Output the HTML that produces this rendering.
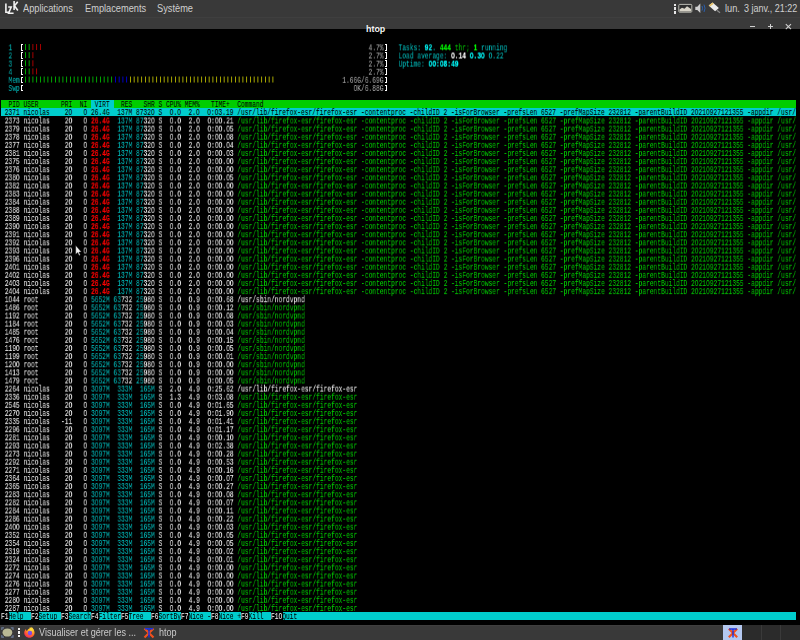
<!DOCTYPE html>
<html><head><meta charset="utf-8"><title>htop</title>
<style>
html,body{margin:0;padding:0;}
body{width:800px;height:640px;overflow:hidden;background:#000;position:relative;font-family:"Liberation Sans",sans-serif;}
.a{position:absolute;}
#term{position:absolute;left:0;top:0;width:800px;height:640px;}
.pt{font-size:10px;color:#cfcfcf;white-space:pre;transform:scaleX(0.925);transform-origin:0 0;line-height:12px}
.bt{font-size:10px;color:#cacaca;white-space:pre;transform:scaleX(0.906);transform-origin:0 0;line-height:12px}
.r{position:absolute;left:1.250px;height:8.125px;white-space:pre;font-family:"Liberation Mono",monospace;-webkit-text-stroke:0.04px currentColor;font-size:9.000px;line-height:8.125px;transform:scaleX(0.69433);transform-origin:0 0;will-change:transform;}

.KG{color:#000}.KC{color:#000}
.W{color:#f4f4f4}
.BW{color:#ffffff;font-weight:bold;-webkit-text-stroke:0.15px currentColor}
.CY{color:#00bdbd}
.BCY{color:#00ffff;font-weight:bold;-webkit-text-stroke:0.15px currentColor}
.GR{color:#00cd00}
.BGR{color:#00ff00;font-weight:bold;-webkit-text-stroke:0.15px currentColor}
.RD{color:#cd0000}
.BRD{color:#ff0000;font-weight:bold;-webkit-text-stroke:0.15px currentColor}
.BL{color:#0000ee}
.YL{color:#cdcd00}
.K{color:#000000}
.SH{color:#a8a8a8}

</style></head><body>


<div class="a" style="left:0;top:0;width:800px;height:17px;background:#393939"></div>
<div class="a" style="left:0;top:17px;width:800px;height:11.75px;background:#3a3a3a"></div>
<div class="a" style="left:0;top:17px;width:800px;height:1px;background:#3f3f3f"></div>
<svg class="a" style="left:0;top:0" width="24" height="17" viewBox="0 0 24 17">
 <g stroke="#f2f2f2" stroke-width="1.6" fill="none" stroke-linecap="square">
  <path d="M5.9 4.3 V12.2 H8.2"/>
  <path d="M9 7 H11.2 L8.6 13.2 H12.8"/>
  <path d="M14.1 1.8 V9.2 M17.2 2.4 L14.1 6.2 M14.3 5.6 L17.4 9.8"/>
 </g>
</svg>
<div class="a pt" style="left:23px;top:3px;">Applications</div>
<div class="a pt" style="left:84.5px;top:3px;">Emplacements</div>
<div class="a pt" style="left:157.2px;top:3px;">Système</div>
<div class="a" style="left:673.8px;top:3.6px;width:2.6px;height:2.4px;background:#e8e8e8"></div>
<div class="a" style="left:673.8px;top:7.4px;width:2.6px;height:2.4px;background:#e8e8e8"></div>
<div class="a" style="left:673.8px;top:11.2px;width:2.6px;height:2.4px;background:#e8e8e8"></div>
<svg class="a" style="left:676px;top:0" width="50" height="17" viewBox="676 0 50 17">
 <rect x="678.8" y="4.4" width="13" height="7.8" rx="0.8" fill="#2e2e2e" stroke="#b8b8b0" stroke-width="1"/>
 <path d="M679.5 11.6 V9.6 L682 7.8 L684.5 8.8 L687 6.2 L691 9 V11.6 Z" fill="#d8d4c8"/>
 <path d="M695.3 6.8 H697.3 L700.3 3.5 V13 L697.3 10 H695.3 Z" fill="#d0d0d0"/>
 <path d="M702 6 Q703.2 8.2 702 10.6 M704 4.6 Q706 8.2 704 12" stroke="#2a63b8" stroke-width="0.9" fill="none"/>
 <path d="M708.6 5.6 L712.6 2.4 L718.9 7.9 L715.1 11.2 Z" fill="#ececec"/>
 <path d="M708.8 5.4 L712.5 2.6 L713.8 3.7 L710.1 6.6 Z" fill="#e8c46a"/>
 <path d="M716.8 10.2 L720 12.8" stroke="#8a8a8a" stroke-width="1.3"/>
</svg>
<div class="a pt" style="left:725.3px;top:3px;">lun.</div><div class="a pt" style="left:744.2px;top:3px;transform:scaleX(0.9)">3 janv., 21:22</div>
<div class="a" style="left:365.5px;top:22.6px;font-weight:bold;font-size:9.6px;line-height:11px;color:#f4f4f4;transform:scaleX(0.925);transform-origin:0 0;white-space:pre">htop</div>
<div class="a" style="left:750.2px;top:25.6px;width:5.2px;height:1.2px;background:#d0d0d0"></div>
<div class="a" style="left:768.1px;top:26px;width:5px;height:1.1px;background:#d0d0d0"></div>
<div class="a" style="left:770.05px;top:24px;width:1.1px;height:5px;background:#d0d0d0"></div>
<svg class="a" style="left:784px;top:22px" width="9" height="9" viewBox="0 0 9 9"><path d="M1.8 2.2 L7 7.2 M7 2.2 L1.8 7.2" stroke="#d0d0d0" stroke-width="1.1"/></svg>

<div class="a" style="left:1.250px;top:100.000px;width:795.000px;height:8.125px;background:#00cd00"></div>
<div class="a" style="left:91.250px;top:100.000px;width:22.500px;height:8.125px;background:#00cdcd"></div>
<div class="a" style="left:1.250px;top:108.125px;width:795.000px;height:8.125px;background:#00cdcd"></div>
<div class="a" style="left:8.750px;top:611.875px;width:22.500px;height:8.125px;background:#00cdcd"></div>
<div class="a" style="left:38.750px;top:611.875px;width:22.500px;height:8.125px;background:#00cdcd"></div>
<div class="a" style="left:68.750px;top:611.875px;width:22.500px;height:8.125px;background:#00cdcd"></div>
<div class="a" style="left:98.750px;top:611.875px;width:22.500px;height:8.125px;background:#00cdcd"></div>
<div class="a" style="left:128.750px;top:611.875px;width:22.500px;height:8.125px;background:#00cdcd"></div>
<div class="a" style="left:158.750px;top:611.875px;width:22.500px;height:8.125px;background:#00cdcd"></div>
<div class="a" style="left:188.750px;top:611.875px;width:22.500px;height:8.125px;background:#00cdcd"></div>
<div class="a" style="left:218.750px;top:611.875px;width:22.500px;height:8.125px;background:#00cdcd"></div>
<div class="a" style="left:248.750px;top:611.875px;width:22.500px;height:8.125px;background:#00cdcd"></div>
<div class="a" style="left:282.500px;top:611.875px;width:22.500px;height:8.125px;background:#00cdcd"></div>
<div class="a" style="left:305.000px;top:611.875px;width:491.250px;height:8.125px;background:#00cdcd"></div>
<svg class="a" style="left:0;top:0" width="800" height="100" viewBox="0 0 800 100"><rect x="25.000" y="44.025" width="0.800" height="6.000" fill="#00cd00"/><rect x="28.750" y="44.025" width="0.800" height="6.000" fill="#00cd00"/><rect x="32.500" y="44.025" width="0.800" height="6.000" fill="#cd0000"/><rect x="36.250" y="44.025" width="0.800" height="6.000" fill="#cd0000"/><rect x="40.000" y="44.025" width="0.800" height="6.000" fill="#cd0000"/><rect x="25.000" y="52.150" width="0.800" height="6.000" fill="#00cd00"/><rect x="28.750" y="52.150" width="0.800" height="6.000" fill="#00cd00"/><rect x="32.500" y="52.150" width="0.800" height="6.000" fill="#cd0000"/><rect x="25.000" y="60.275" width="0.800" height="6.000" fill="#00cd00"/><rect x="28.750" y="60.275" width="0.800" height="6.000" fill="#00cd00"/><rect x="32.500" y="60.275" width="0.800" height="6.000" fill="#cd0000"/><rect x="25.000" y="68.400" width="0.800" height="6.000" fill="#00cd00"/><rect x="28.750" y="68.400" width="0.800" height="6.000" fill="#00cd00"/><rect x="32.500" y="68.400" width="0.800" height="6.000" fill="#cd0000"/><rect x="36.250" y="68.400" width="0.800" height="6.000" fill="#cd0000"/><rect x="25.000" y="76.525" width="0.800" height="6.000" fill="#00cd00"/><rect x="28.750" y="76.525" width="0.800" height="6.000" fill="#00cd00"/><rect x="32.500" y="76.525" width="0.800" height="6.000" fill="#00cd00"/><rect x="36.250" y="76.525" width="0.800" height="6.000" fill="#00cd00"/><rect x="40.000" y="76.525" width="0.800" height="6.000" fill="#00cd00"/><rect x="43.750" y="76.525" width="0.800" height="6.000" fill="#00cd00"/><rect x="47.500" y="76.525" width="0.800" height="6.000" fill="#00cd00"/><rect x="51.250" y="76.525" width="0.800" height="6.000" fill="#00cd00"/><rect x="55.000" y="76.525" width="0.800" height="6.000" fill="#00cd00"/><rect x="58.750" y="76.525" width="0.800" height="6.000" fill="#00cd00"/><rect x="62.500" y="76.525" width="0.800" height="6.000" fill="#00cd00"/><rect x="66.250" y="76.525" width="0.800" height="6.000" fill="#00cd00"/><rect x="70.000" y="76.525" width="0.800" height="6.000" fill="#00cd00"/><rect x="73.750" y="76.525" width="0.800" height="6.000" fill="#00cd00"/><rect x="77.500" y="76.525" width="0.800" height="6.000" fill="#00cd00"/><rect x="81.250" y="76.525" width="0.800" height="6.000" fill="#00cd00"/><rect x="85.000" y="76.525" width="0.800" height="6.000" fill="#00cd00"/><rect x="88.750" y="76.525" width="0.800" height="6.000" fill="#00cd00"/><rect x="92.500" y="76.525" width="0.800" height="6.000" fill="#00cd00"/><rect x="96.250" y="76.525" width="0.800" height="6.000" fill="#00cd00"/><rect x="100.000" y="76.525" width="0.800" height="6.000" fill="#00cd00"/><rect x="103.750" y="76.525" width="0.800" height="6.000" fill="#00cd00"/><rect x="107.500" y="76.525" width="0.800" height="6.000" fill="#00cd00"/><rect x="111.250" y="76.525" width="0.800" height="6.000" fill="#00cd00"/><rect x="115.000" y="76.525" width="0.800" height="6.000" fill="#0000ee"/><rect x="118.750" y="76.525" width="0.800" height="6.000" fill="#0000ee"/><rect x="122.500" y="76.525" width="0.800" height="6.000" fill="#0000ee"/><rect x="126.250" y="76.525" width="0.800" height="6.000" fill="#0000ee"/><rect x="130.000" y="76.525" width="0.800" height="6.000" fill="#cdcd00"/><rect x="133.750" y="76.525" width="0.800" height="6.000" fill="#cdcd00"/><rect x="137.500" y="76.525" width="0.800" height="6.000" fill="#cdcd00"/><rect x="141.250" y="76.525" width="0.800" height="6.000" fill="#cdcd00"/><rect x="145.000" y="76.525" width="0.800" height="6.000" fill="#cdcd00"/><rect x="148.750" y="76.525" width="0.800" height="6.000" fill="#cdcd00"/><rect x="152.500" y="76.525" width="0.800" height="6.000" fill="#cdcd00"/><rect x="156.250" y="76.525" width="0.800" height="6.000" fill="#cdcd00"/><rect x="160.000" y="76.525" width="0.800" height="6.000" fill="#cdcd00"/><rect x="163.750" y="76.525" width="0.800" height="6.000" fill="#cdcd00"/><rect x="167.500" y="76.525" width="0.800" height="6.000" fill="#cdcd00"/><rect x="171.250" y="76.525" width="0.800" height="6.000" fill="#cdcd00"/><rect x="175.000" y="76.525" width="0.800" height="6.000" fill="#cdcd00"/><rect x="178.750" y="76.525" width="0.800" height="6.000" fill="#cdcd00"/><rect x="182.500" y="76.525" width="0.800" height="6.000" fill="#cdcd00"/><rect x="186.250" y="76.525" width="0.800" height="6.000" fill="#cdcd00"/><rect x="190.000" y="76.525" width="0.800" height="6.000" fill="#cdcd00"/><rect x="193.750" y="76.525" width="0.800" height="6.000" fill="#cdcd00"/><rect x="197.500" y="76.525" width="0.800" height="6.000" fill="#cdcd00"/><rect x="201.250" y="76.525" width="0.800" height="6.000" fill="#cdcd00"/><rect x="205.000" y="76.525" width="0.800" height="6.000" fill="#cdcd00"/><rect x="208.750" y="76.525" width="0.800" height="6.000" fill="#cdcd00"/><rect x="212.500" y="76.525" width="0.800" height="6.000" fill="#cdcd00"/><rect x="216.250" y="76.525" width="0.800" height="6.000" fill="#cdcd00"/><rect x="220.000" y="76.525" width="0.800" height="6.000" fill="#cdcd00"/><rect x="223.750" y="76.525" width="0.800" height="6.000" fill="#cdcd00"/><rect x="227.500" y="76.525" width="0.800" height="6.000" fill="#cdcd00"/><rect x="231.250" y="76.525" width="0.800" height="6.000" fill="#cdcd00"/><rect x="235.000" y="76.525" width="0.800" height="6.000" fill="#cdcd00"/><rect x="238.750" y="76.525" width="0.800" height="6.000" fill="#cdcd00"/><rect x="242.500" y="76.525" width="0.800" height="6.000" fill="#cdcd00"/><rect x="246.250" y="76.525" width="0.800" height="6.000" fill="#cdcd00"/><rect x="250.000" y="76.525" width="0.800" height="6.000" fill="#cdcd00"/><rect x="253.750" y="76.525" width="0.800" height="6.000" fill="#cdcd00"/><rect x="257.500" y="76.525" width="0.800" height="6.000" fill="#cdcd00"/><rect x="261.250" y="76.525" width="0.800" height="6.000" fill="#cdcd00"/><rect x="265.000" y="76.525" width="0.800" height="6.000" fill="#cdcd00"/><rect x="268.750" y="76.525" width="0.800" height="6.000" fill="#cdcd00"/><rect x="272.500" y="76.525" width="0.800" height="6.000" fill="#cdcd00"/></svg>
<div class="a" style="left:21.000px;top:44.025px;width:2.000px;height:6.800px;border-left:1.1px solid #fff;border-top:0.8px solid #fff;border-bottom:0.8px solid #fff;box-sizing:border-box"></div>
<div class="a" style="left:384.550px;top:44.025px;width:2.000px;height:6.800px;border-right:1.1px solid #fff;border-top:0.8px solid #fff;border-bottom:0.8px solid #fff;box-sizing:border-box"></div>
<div class="a" style="left:21.000px;top:52.150px;width:2.000px;height:6.800px;border-left:1.1px solid #fff;border-top:0.8px solid #fff;border-bottom:0.8px solid #fff;box-sizing:border-box"></div>
<div class="a" style="left:384.550px;top:52.150px;width:2.000px;height:6.800px;border-right:1.1px solid #fff;border-top:0.8px solid #fff;border-bottom:0.8px solid #fff;box-sizing:border-box"></div>
<div class="a" style="left:21.000px;top:60.275px;width:2.000px;height:6.800px;border-left:1.1px solid #fff;border-top:0.8px solid #fff;border-bottom:0.8px solid #fff;box-sizing:border-box"></div>
<div class="a" style="left:384.550px;top:60.275px;width:2.000px;height:6.800px;border-right:1.1px solid #fff;border-top:0.8px solid #fff;border-bottom:0.8px solid #fff;box-sizing:border-box"></div>
<div class="a" style="left:21.000px;top:68.400px;width:2.000px;height:6.800px;border-left:1.1px solid #fff;border-top:0.8px solid #fff;border-bottom:0.8px solid #fff;box-sizing:border-box"></div>
<div class="a" style="left:384.550px;top:68.400px;width:2.000px;height:6.800px;border-right:1.1px solid #fff;border-top:0.8px solid #fff;border-bottom:0.8px solid #fff;box-sizing:border-box"></div>
<div class="a" style="left:21.000px;top:76.525px;width:2.000px;height:6.800px;border-left:1.1px solid #fff;border-top:0.8px solid #fff;border-bottom:0.8px solid #fff;box-sizing:border-box"></div>
<div class="a" style="left:384.550px;top:76.525px;width:2.000px;height:6.800px;border-right:1.1px solid #fff;border-top:0.8px solid #fff;border-bottom:0.8px solid #fff;box-sizing:border-box"></div>
<div class="a" style="left:21.000px;top:84.650px;width:2.000px;height:6.800px;border-left:1.1px solid #fff;border-top:0.8px solid #fff;border-bottom:0.8px solid #fff;box-sizing:border-box"></div>
<div class="a" style="left:384.550px;top:84.650px;width:2.000px;height:6.800px;border-right:1.1px solid #fff;border-top:0.8px solid #fff;border-bottom:0.8px solid #fff;box-sizing:border-box"></div>
<div id="term">
<div class="r" style="top:44px;transform:translateY(0.325px) scaleX(0.69433)">  <span class="CY">1  </span>                                                                                             <span class="SH">4.7%</span>    <span class="CY">Tasks: </span><span class="BCY">92</span><span class="CY">. </span><span class="BGR">444</span><span class="GR"> thr;</span><span class="CY"> </span><span class="BGR">1</span><span class="CY"> running</span></div>
<div class="r" style="top:52px;transform:translateY(0.450px) scaleX(0.69433)">  <span class="CY">2  </span>                                                                                             <span class="SH">2.7%</span>    <span class="CY">Load average: </span><span class="BW">O.14 </span><span class="BCY">O.3O </span><span class="CY">O.22</span></div>
<div class="r" style="top:60px;transform:translateY(0.575px) scaleX(0.69433)">  <span class="CY">3  </span>                                                                                             <span class="SH">2.7%</span>    <span class="CY">Uptime: </span><span class="BCY">OO:O8:49</span></div>
<div class="r" style="top:68px;transform:translateY(0.700px) scaleX(0.69433)">  <span class="CY">4  </span>                                                                                             <span class="SH">2.7%</span> </div>
<div class="r" style="top:76px;transform:translateY(0.825px) scaleX(0.69433)">  <span class="CY">Mem</span>                                                                                      <span class="SH">1.66G/6.69G</span> </div>
<div class="r" style="top:84px;transform:translateY(0.950px) scaleX(0.69433)">  <span class="CY">Swp</span>                                                                                         <span class="SH">OK/6.88G</span> </div>
<div class="r" style="top:101.200px;will-change:auto"><span class="KG">  PID USER      PRI  NI </span><span class="KC"> VIRT </span><span class="KG">  RES   SHR S CPU% MEM%   TIME+  Command                                                                                                                                              </span></div>
<div class="r" style="top:109.325px;will-change:auto"><span class="KC"> 2371 nicolas    2O   O 26.4G  137M 8732O S  O.O  2.O  O:O3.19 /usr/lib/firefox-esr/firefox-esr -contentproc -childID 2 -isForBrowser -prefsLen 6527 -prefMapSize 232812 -parentBuildID 2O21O927121355 -appdir /usr/</span></div>
<div class="r" style="top:117px;transform:translateY(0.450px) scaleX(0.69433)"><span class="W"> 2373 </span><span class="W">nicolas   </span><span class="W"> 2O </span><span class="W">  O </span><span class="BRD">26.4G</span> <span class="CY"> 137M</span> <span class="CY">87</span><span class="W">32O</span> <span class="W">S </span><span class="W"> O.O </span><span class="W"> 2.O </span><span class="W"> O:OO.21 </span><span class="GR">/usr/lib/firefox-esr/firefox-esr -contentproc -childID 2 -isForBrowser -prefsLen 6527 -prefMapSize 232812 -parentBuildID 2O21O927121355 -appdir /usr/</span></div>
<div class="r" style="top:125px;transform:translateY(0.575px) scaleX(0.69433)"><span class="W"> 2379 </span><span class="W">nicolas   </span><span class="W"> 2O </span><span class="W">  O </span><span class="BRD">26.4G</span> <span class="CY"> 137M</span> <span class="CY">87</span><span class="W">32O</span> <span class="W">S </span><span class="W"> O.O </span><span class="W"> 2.O </span><span class="W"> O:OO.O5 </span><span class="GR">/usr/lib/firefox-esr/firefox-esr -contentproc -childID 2 -isForBrowser -prefsLen 6527 -prefMapSize 232812 -parentBuildID 2O21O927121355 -appdir /usr/</span></div>
<div class="r" style="top:133px;transform:translateY(0.700px) scaleX(0.69433)"><span class="W"> 2378 </span><span class="W">nicolas   </span><span class="W"> 2O </span><span class="W">  O </span><span class="BRD">26.4G</span> <span class="CY"> 137M</span> <span class="CY">87</span><span class="W">32O</span> <span class="W">S </span><span class="W"> O.O </span><span class="W"> 2.O </span><span class="W"> O:OO.O8 </span><span class="GR">/usr/lib/firefox-esr/firefox-esr -contentproc -childID 2 -isForBrowser -prefsLen 6527 -prefMapSize 232812 -parentBuildID 2O21O927121355 -appdir /usr/</span></div>
<div class="r" style="top:141px;transform:translateY(0.825px) scaleX(0.69433)"><span class="W"> 2377 </span><span class="W">nicolas   </span><span class="W"> 2O </span><span class="W">  O </span><span class="BRD">26.4G</span> <span class="CY"> 137M</span> <span class="CY">87</span><span class="W">32O</span> <span class="W">S </span><span class="W"> O.O </span><span class="W"> 2.O </span><span class="W"> O:OO.O4 </span><span class="GR">/usr/lib/firefox-esr/firefox-esr -contentproc -childID 2 -isForBrowser -prefsLen 6527 -prefMapSize 232812 -parentBuildID 2O21O927121355 -appdir /usr/</span></div>
<div class="r" style="top:149px;transform:translateY(0.950px) scaleX(0.69433)"><span class="W"> 2381 </span><span class="W">nicolas   </span><span class="W"> 2O </span><span class="W">  O </span><span class="BRD">26.4G</span> <span class="CY"> 137M</span> <span class="CY">87</span><span class="W">32O</span> <span class="W">S </span><span class="W"> O.O </span><span class="W"> 2.O </span><span class="W"> O:OO.O3 </span><span class="GR">/usr/lib/firefox-esr/firefox-esr -contentproc -childID 2 -isForBrowser -prefsLen 6527 -prefMapSize 232812 -parentBuildID 2O21O927121355 -appdir /usr/</span></div>
<div class="r" style="top:158px;transform:translateY(0.075px) scaleX(0.69433)"><span class="W"> 2375 </span><span class="W">nicolas   </span><span class="W"> 2O </span><span class="W">  O </span><span class="BRD">26.4G</span> <span class="CY"> 137M</span> <span class="CY">87</span><span class="W">32O</span> <span class="W">S </span><span class="W"> O.O </span><span class="W"> 2.O </span><span class="W"> O:OO.OO </span><span class="GR">/usr/lib/firefox-esr/firefox-esr -contentproc -childID 2 -isForBrowser -prefsLen 6527 -prefMapSize 232812 -parentBuildID 2O21O927121355 -appdir /usr/</span></div>
<div class="r" style="top:166px;transform:translateY(0.200px) scaleX(0.69433)"><span class="W"> 2376 </span><span class="W">nicolas   </span><span class="W"> 2O </span><span class="W">  O </span><span class="BRD">26.4G</span> <span class="CY"> 137M</span> <span class="CY">87</span><span class="W">32O</span> <span class="W">S </span><span class="W"> O.O </span><span class="W"> 2.O </span><span class="W"> O:OO.OO </span><span class="GR">/usr/lib/firefox-esr/firefox-esr -contentproc -childID 2 -isForBrowser -prefsLen 6527 -prefMapSize 232812 -parentBuildID 2O21O927121355 -appdir /usr/</span></div>
<div class="r" style="top:174px;transform:translateY(0.325px) scaleX(0.69433)"><span class="W"> 238O </span><span class="W">nicolas   </span><span class="W"> 2O </span><span class="W">  O </span><span class="BRD">26.4G</span> <span class="CY"> 137M</span> <span class="CY">87</span><span class="W">32O</span> <span class="W">S </span><span class="W"> O.O </span><span class="W"> 2.O </span><span class="W"> O:OO.O5 </span><span class="GR">/usr/lib/firefox-esr/firefox-esr -contentproc -childID 2 -isForBrowser -prefsLen 6527 -prefMapSize 232812 -parentBuildID 2O21O927121355 -appdir /usr/</span></div>
<div class="r" style="top:182px;transform:translateY(0.450px) scaleX(0.69433)"><span class="W"> 2382 </span><span class="W">nicolas   </span><span class="W"> 2O </span><span class="W">  O </span><span class="BRD">26.4G</span> <span class="CY"> 137M</span> <span class="CY">87</span><span class="W">32O</span> <span class="W">S </span><span class="W"> O.O </span><span class="W"> 2.O </span><span class="W"> O:OO.OO </span><span class="GR">/usr/lib/firefox-esr/firefox-esr -contentproc -childID 2 -isForBrowser -prefsLen 6527 -prefMapSize 232812 -parentBuildID 2O21O927121355 -appdir /usr/</span></div>
<div class="r" style="top:190px;transform:translateY(0.575px) scaleX(0.69433)"><span class="W"> 2383 </span><span class="W">nicolas   </span><span class="W"> 2O </span><span class="W">  O </span><span class="BRD">26.4G</span> <span class="CY"> 137M</span> <span class="CY">87</span><span class="W">32O</span> <span class="W">S </span><span class="W"> O.O </span><span class="W"> 2.O </span><span class="W"> O:OO.OO </span><span class="GR">/usr/lib/firefox-esr/firefox-esr -contentproc -childID 2 -isForBrowser -prefsLen 6527 -prefMapSize 232812 -parentBuildID 2O21O927121355 -appdir /usr/</span></div>
<div class="r" style="top:198px;transform:translateY(0.700px) scaleX(0.69433)"><span class="W"> 2384 </span><span class="W">nicolas   </span><span class="W"> 2O </span><span class="W">  O </span><span class="BRD">26.4G</span> <span class="CY"> 137M</span> <span class="CY">87</span><span class="W">32O</span> <span class="W">S </span><span class="W"> O.O </span><span class="W"> 2.O </span><span class="W"> O:OO.OO </span><span class="GR">/usr/lib/firefox-esr/firefox-esr -contentproc -childID 2 -isForBrowser -prefsLen 6527 -prefMapSize 232812 -parentBuildID 2O21O927121355 -appdir /usr/</span></div>
<div class="r" style="top:206px;transform:translateY(0.825px) scaleX(0.69433)"><span class="W"> 2388 </span><span class="W">nicolas   </span><span class="W"> 2O </span><span class="W">  O </span><span class="BRD">26.4G</span> <span class="CY"> 137M</span> <span class="CY">87</span><span class="W">32O</span> <span class="W">S </span><span class="W"> O.O </span><span class="W"> 2.O </span><span class="W"> O:OO.OO </span><span class="GR">/usr/lib/firefox-esr/firefox-esr -contentproc -childID 2 -isForBrowser -prefsLen 6527 -prefMapSize 232812 -parentBuildID 2O21O927121355 -appdir /usr/</span></div>
<div class="r" style="top:214px;transform:translateY(0.950px) scaleX(0.69433)"><span class="W"> 2389 </span><span class="W">nicolas   </span><span class="W"> 2O </span><span class="W">  O </span><span class="BRD">26.4G</span> <span class="CY"> 137M</span> <span class="CY">87</span><span class="W">32O</span> <span class="W">S </span><span class="W"> O.O </span><span class="W"> 2.O </span><span class="W"> O:OO.OO </span><span class="GR">/usr/lib/firefox-esr/firefox-esr -contentproc -childID 2 -isForBrowser -prefsLen 6527 -prefMapSize 232812 -parentBuildID 2O21O927121355 -appdir /usr/</span></div>
<div class="r" style="top:223px;transform:translateY(0.075px) scaleX(0.69433)"><span class="W"> 239O </span><span class="W">nicolas   </span><span class="W"> 2O </span><span class="W">  O </span><span class="BRD">26.4G</span> <span class="CY"> 137M</span> <span class="CY">87</span><span class="W">32O</span> <span class="W">S </span><span class="W"> O.O </span><span class="W"> 2.O </span><span class="W"> O:OO.OO </span><span class="GR">/usr/lib/firefox-esr/firefox-esr -contentproc -childID 2 -isForBrowser -prefsLen 6527 -prefMapSize 232812 -parentBuildID 2O21O927121355 -appdir /usr/</span></div>
<div class="r" style="top:231px;transform:translateY(0.200px) scaleX(0.69433)"><span class="W"> 2391 </span><span class="W">nicolas   </span><span class="W"> 2O </span><span class="W">  O </span><span class="BRD">26.4G</span> <span class="CY"> 137M</span> <span class="CY">87</span><span class="W">32O</span> <span class="W">S </span><span class="W"> O.O </span><span class="W"> 2.O </span><span class="W"> O:OO.OO </span><span class="GR">/usr/lib/firefox-esr/firefox-esr -contentproc -childID 2 -isForBrowser -prefsLen 6527 -prefMapSize 232812 -parentBuildID 2O21O927121355 -appdir /usr/</span></div>
<div class="r" style="top:239px;transform:translateY(0.325px) scaleX(0.69433)"><span class="W"> 2392 </span><span class="W">nicolas   </span><span class="W"> 2O </span><span class="W">  O </span><span class="BRD">26.4G</span> <span class="CY"> 137M</span> <span class="CY">87</span><span class="W">32O</span> <span class="W">S </span><span class="W"> O.O </span><span class="W"> 2.O </span><span class="W"> O:OO.OO </span><span class="GR">/usr/lib/firefox-esr/firefox-esr -contentproc -childID 2 -isForBrowser -prefsLen 6527 -prefMapSize 232812 -parentBuildID 2O21O927121355 -appdir /usr/</span></div>
<div class="r" style="top:247px;transform:translateY(0.450px) scaleX(0.69433)"><span class="W"> 2393 </span><span class="W">nicolas   </span><span class="W"> 2O </span><span class="W">  O </span><span class="BRD">26.4G</span> <span class="CY"> 137M</span> <span class="CY">87</span><span class="W">32O</span> <span class="W">S </span><span class="W"> O.O </span><span class="W"> 2.O </span><span class="W"> O:OO.OO </span><span class="GR">/usr/lib/firefox-esr/firefox-esr -contentproc -childID 2 -isForBrowser -prefsLen 6527 -prefMapSize 232812 -parentBuildID 2O21O927121355 -appdir /usr/</span></div>
<div class="r" style="top:255px;transform:translateY(0.575px) scaleX(0.69433)"><span class="W"> 2396 </span><span class="W">nicolas   </span><span class="W"> 2O </span><span class="W">  O </span><span class="BRD">26.4G</span> <span class="CY"> 137M</span> <span class="CY">87</span><span class="W">32O</span> <span class="W">S </span><span class="W"> O.O </span><span class="W"> 2.O </span><span class="W"> O:OO.OO </span><span class="GR">/usr/lib/firefox-esr/firefox-esr -contentproc -childID 2 -isForBrowser -prefsLen 6527 -prefMapSize 232812 -parentBuildID 2O21O927121355 -appdir /usr/</span></div>
<div class="r" style="top:263px;transform:translateY(0.700px) scaleX(0.69433)"><span class="W"> 24O1 </span><span class="W">nicolas   </span><span class="W"> 2O </span><span class="W">  O </span><span class="BRD">26.4G</span> <span class="CY"> 137M</span> <span class="CY">87</span><span class="W">32O</span> <span class="W">S </span><span class="W"> O.O </span><span class="W"> 2.O </span><span class="W"> O:OO.OO </span><span class="GR">/usr/lib/firefox-esr/firefox-esr -contentproc -childID 2 -isForBrowser -prefsLen 6527 -prefMapSize 232812 -parentBuildID 2O21O927121355 -appdir /usr/</span></div>
<div class="r" style="top:271px;transform:translateY(0.825px) scaleX(0.69433)"><span class="W"> 24O2 </span><span class="W">nicolas   </span><span class="W"> 2O </span><span class="W">  O </span><span class="BRD">26.4G</span> <span class="CY"> 137M</span> <span class="CY">87</span><span class="W">32O</span> <span class="W">S </span><span class="W"> O.O </span><span class="W"> 2.O </span><span class="W"> O:OO.OO </span><span class="GR">/usr/lib/firefox-esr/firefox-esr -contentproc -childID 2 -isForBrowser -prefsLen 6527 -prefMapSize 232812 -parentBuildID 2O21O927121355 -appdir /usr/</span></div>
<div class="r" style="top:279px;transform:translateY(0.950px) scaleX(0.69433)"><span class="W"> 24O3 </span><span class="W">nicolas   </span><span class="W"> 2O </span><span class="W">  O </span><span class="BRD">26.4G</span> <span class="CY"> 137M</span> <span class="CY">87</span><span class="W">32O</span> <span class="W">S </span><span class="W"> O.O </span><span class="W"> 2.O </span><span class="W"> O:OO.OO </span><span class="GR">/usr/lib/firefox-esr/firefox-esr -contentproc -childID 2 -isForBrowser -prefsLen 6527 -prefMapSize 232812 -parentBuildID 2O21O927121355 -appdir /usr/</span></div>
<div class="r" style="top:288px;transform:translateY(0.075px) scaleX(0.69433)"><span class="W"> 24O4 </span><span class="W">nicolas   </span><span class="W"> 2O </span><span class="W">  O </span><span class="BRD">26.4G</span> <span class="CY"> 137M</span> <span class="CY">87</span><span class="W">32O</span> <span class="W">S </span><span class="W"> O.O </span><span class="W"> 2.O </span><span class="W"> O:OO.OO </span><span class="GR">/usr/lib/firefox-esr/firefox-esr -contentproc -childID 2 -isForBrowser -prefsLen 6527 -prefMapSize 232812 -parentBuildID 2O21O927121355 -appdir /usr/</span></div>
<div class="r" style="top:296px;transform:translateY(0.200px) scaleX(0.69433)"><span class="W"> 1O44 </span><span class="W">root      </span><span class="W"> 2O </span><span class="W">  O </span><span class="CY">5652M</span> <span class="CY">63</span><span class="W">732</span> <span class="CY">25</span><span class="W">98O</span> <span class="W">S </span><span class="W"> O.O </span><span class="W"> O.9 </span><span class="W"> O:OO.68 </span><span class="W">/usr/sbin/nordvpnd</span></div>
<div class="r" style="top:304px;transform:translateY(0.325px) scaleX(0.69433)"><span class="W"> 1486 </span><span class="W">root      </span><span class="W"> 2O </span><span class="W">  O </span><span class="CY">5652M</span> <span class="CY">63</span><span class="W">732</span> <span class="CY">25</span><span class="W">98O</span> <span class="W">S </span><span class="W"> O.O </span><span class="W"> O.9 </span><span class="W"> O:OO.12 </span><span class="GR">/usr/sbin/nordvpnd</span></div>
<div class="r" style="top:312px;transform:translateY(0.450px) scaleX(0.69433)"><span class="W"> 1192 </span><span class="W">root      </span><span class="W"> 2O </span><span class="W">  O </span><span class="CY">5652M</span> <span class="CY">63</span><span class="W">732</span> <span class="CY">25</span><span class="W">98O</span> <span class="W">S </span><span class="W"> O.O </span><span class="W"> O.9 </span><span class="W"> O:OO.O8 </span><span class="GR">/usr/sbin/nordvpnd</span></div>
<div class="r" style="top:320px;transform:translateY(0.575px) scaleX(0.69433)"><span class="W"> 1184 </span><span class="W">root      </span><span class="W"> 2O </span><span class="W">  O </span><span class="CY">5652M</span> <span class="CY">63</span><span class="W">732</span> <span class="CY">25</span><span class="W">98O</span> <span class="W">S </span><span class="W"> O.O </span><span class="W"> O.9 </span><span class="W"> O:OO.O3 </span><span class="GR">/usr/sbin/nordvpnd</span></div>
<div class="r" style="top:328px;transform:translateY(0.700px) scaleX(0.69433)"><span class="W"> 1485 </span><span class="W">root      </span><span class="W"> 2O </span><span class="W">  O </span><span class="CY">5652M</span> <span class="CY">63</span><span class="W">732</span> <span class="CY">25</span><span class="W">98O</span> <span class="W">S </span><span class="W"> O.O </span><span class="W"> O.9 </span><span class="W"> O:OO.O4 </span><span class="GR">/usr/sbin/nordvpnd</span></div>
<div class="r" style="top:336px;transform:translateY(0.825px) scaleX(0.69433)"><span class="W"> 1476 </span><span class="W">root      </span><span class="W"> 2O </span><span class="W">  O </span><span class="CY">5652M</span> <span class="CY">63</span><span class="W">732</span> <span class="CY">25</span><span class="W">98O</span> <span class="W">S </span><span class="W"> O.O </span><span class="W"> O.9 </span><span class="W"> O:OO.15 </span><span class="GR">/usr/sbin/nordvpnd</span></div>
<div class="r" style="top:344px;transform:translateY(0.950px) scaleX(0.69433)"><span class="W"> 119O </span><span class="W">root      </span><span class="W"> 2O </span><span class="W">  O </span><span class="CY">5652M</span> <span class="CY">63</span><span class="W">732</span> <span class="CY">25</span><span class="W">98O</span> <span class="W">S </span><span class="W"> O.O </span><span class="W"> O.9 </span><span class="W"> O:OO.O5 </span><span class="GR">/usr/sbin/nordvpnd</span></div>
<div class="r" style="top:353px;transform:translateY(0.075px) scaleX(0.69433)"><span class="W"> 1199 </span><span class="W">root      </span><span class="W"> 2O </span><span class="W">  O </span><span class="CY">5652M</span> <span class="CY">63</span><span class="W">732</span> <span class="CY">25</span><span class="W">98O</span> <span class="W">S </span><span class="W"> O.O </span><span class="W"> O.9 </span><span class="W"> O:OO.O1 </span><span class="GR">/usr/sbin/nordvpnd</span></div>
<div class="r" style="top:361px;transform:translateY(0.200px) scaleX(0.69433)"><span class="W"> 12OO </span><span class="W">root      </span><span class="W"> 2O </span><span class="W">  O </span><span class="CY">5652M</span> <span class="CY">63</span><span class="W">732</span> <span class="CY">25</span><span class="W">98O</span> <span class="W">S </span><span class="W"> O.O </span><span class="W"> O.9 </span><span class="W"> O:OO.OO </span><span class="GR">/usr/sbin/nordvpnd</span></div>
<div class="r" style="top:369px;transform:translateY(0.325px) scaleX(0.69433)"><span class="W"> 1413 </span><span class="W">root      </span><span class="W"> 2O </span><span class="W">  O </span><span class="CY">5652M</span> <span class="CY">63</span><span class="W">732</span> <span class="CY">25</span><span class="W">98O</span> <span class="W">S </span><span class="W"> O.O </span><span class="W"> O.9 </span><span class="W"> O:OO.OO </span><span class="GR">/usr/sbin/nordvpnd</span></div>
<div class="r" style="top:377px;transform:translateY(0.450px) scaleX(0.69433)"><span class="W"> 1479 </span><span class="W">root      </span><span class="W"> 2O </span><span class="W">  O </span><span class="CY">5652M</span> <span class="CY">63</span><span class="W">732</span> <span class="CY">25</span><span class="W">98O</span> <span class="W">S </span><span class="W"> O.O </span><span class="W"> O.9 </span><span class="W"> O:OO.O5 </span><span class="GR">/usr/sbin/nordvpnd</span></div>
<div class="r" style="top:385px;transform:translateY(0.575px) scaleX(0.69433)"><span class="W"> 2264 </span><span class="W">nicolas   </span><span class="W"> 2O </span><span class="W">  O </span><span class="CY">3O97M</span> <span class="CY"> 333M</span> <span class="CY"> 165M</span> <span class="W">S </span><span class="W"> 2.O </span><span class="W"> 4.9 </span><span class="W"> O:25.62 </span><span class="W">/usr/lib/firefox-esr/firefox-esr</span></div>
<div class="r" style="top:393px;transform:translateY(0.700px) scaleX(0.69433)"><span class="W"> 2336 </span><span class="W">nicolas   </span><span class="W"> 2O </span><span class="W">  O </span><span class="CY">3O97M</span> <span class="CY"> 333M</span> <span class="CY"> 165M</span> <span class="W">S </span><span class="W"> 1.3 </span><span class="W"> 4.9 </span><span class="W"> O:O3.O8 </span><span class="GR">/usr/lib/firefox-esr/firefox-esr</span></div>
<div class="r" style="top:401px;transform:translateY(0.825px) scaleX(0.69433)"><span class="W"> 2545 </span><span class="W">nicolas   </span><span class="W"> 2O </span><span class="W">  O </span><span class="CY">3O97M</span> <span class="CY"> 333M</span> <span class="CY"> 165M</span> <span class="W">S </span><span class="W"> O.O </span><span class="W"> 4.9 </span><span class="W"> O:O1.65 </span><span class="GR">/usr/lib/firefox-esr/firefox-esr</span></div>
<div class="r" style="top:409px;transform:translateY(0.950px) scaleX(0.69433)"><span class="W"> 227O </span><span class="W">nicolas   </span><span class="W"> 2O </span><span class="W">  O </span><span class="CY">3O97M</span> <span class="CY"> 333M</span> <span class="CY"> 165M</span> <span class="W">S </span><span class="W"> O.O </span><span class="W"> 4.9 </span><span class="W"> O:O1.9O </span><span class="GR">/usr/lib/firefox-esr/firefox-esr</span></div>
<div class="r" style="top:418px;transform:translateY(0.075px) scaleX(0.69433)"><span class="W"> 2335 </span><span class="W">nicolas   </span><span class="W">-11 </span><span class="W">  O </span><span class="CY">3O97M</span> <span class="CY"> 333M</span> <span class="CY"> 165M</span> <span class="W">S </span><span class="W"> O.O </span><span class="W"> 4.9 </span><span class="W"> O:O1.41 </span><span class="GR">/usr/lib/firefox-esr/firefox-esr</span></div>
<div class="r" style="top:426px;transform:translateY(0.200px) scaleX(0.69433)"><span class="W"> 2296 </span><span class="W">nicolas   </span><span class="W"> 2O </span><span class="W">  O </span><span class="CY">3O97M</span> <span class="CY"> 333M</span> <span class="CY"> 165M</span> <span class="W">S </span><span class="W"> O.O </span><span class="W"> 4.9 </span><span class="W"> O:O1.17 </span><span class="GR">/usr/lib/firefox-esr/firefox-esr</span></div>
<div class="r" style="top:434px;transform:translateY(0.325px) scaleX(0.69433)"><span class="W"> 2281 </span><span class="W">nicolas   </span><span class="W"> 2O </span><span class="W">  O </span><span class="CY">3O97M</span> <span class="CY"> 333M</span> <span class="CY"> 165M</span> <span class="W">S </span><span class="W"> O.O </span><span class="W"> 4.9 </span><span class="W"> O:OO.1O </span><span class="GR">/usr/lib/firefox-esr/firefox-esr</span></div>
<div class="r" style="top:442px;transform:translateY(0.450px) scaleX(0.69433)"><span class="W"> 2293 </span><span class="W">nicolas   </span><span class="W"> 2O </span><span class="W">  O </span><span class="CY">3O97M</span> <span class="CY"> 333M</span> <span class="CY"> 165M</span> <span class="W">S </span><span class="W"> O.O </span><span class="W"> 4.9 </span><span class="W"> O:O2.38 </span><span class="GR">/usr/lib/firefox-esr/firefox-esr</span></div>
<div class="r" style="top:450px;transform:translateY(0.575px) scaleX(0.69433)"><span class="W"> 2273 </span><span class="W">nicolas   </span><span class="W"> 2O </span><span class="W">  O </span><span class="CY">3O97M</span> <span class="CY"> 333M</span> <span class="CY"> 165M</span> <span class="W">S </span><span class="W"> O.O </span><span class="W"> 4.9 </span><span class="W"> O:OO.28 </span><span class="GR">/usr/lib/firefox-esr/firefox-esr</span></div>
<div class="r" style="top:458px;transform:translateY(0.700px) scaleX(0.69433)"><span class="W"> 2292 </span><span class="W">nicolas   </span><span class="W"> 2O </span><span class="W">  O </span><span class="CY">3O97M</span> <span class="CY"> 333M</span> <span class="CY"> 165M</span> <span class="W">S </span><span class="W"> O.O </span><span class="W"> 4.9 </span><span class="W"> O:OO.53 </span><span class="GR">/usr/lib/firefox-esr/firefox-esr</span></div>
<div class="r" style="top:466px;transform:translateY(0.825px) scaleX(0.69433)"><span class="W"> 2271 </span><span class="W">nicolas   </span><span class="W"> 2O </span><span class="W">  O </span><span class="CY">3O97M</span> <span class="CY"> 333M</span> <span class="CY"> 165M</span> <span class="W">S </span><span class="W"> O.O </span><span class="W"> 4.9 </span><span class="W"> O:OO.16 </span><span class="GR">/usr/lib/firefox-esr/firefox-esr</span></div>
<div class="r" style="top:474px;transform:translateY(0.950px) scaleX(0.69433)"><span class="W"> 2364 </span><span class="W">nicolas   </span><span class="W"> 2O </span><span class="W">  O </span><span class="CY">3O97M</span> <span class="CY"> 333M</span> <span class="CY"> 165M</span> <span class="W">S </span><span class="W"> O.O </span><span class="W"> 4.9 </span><span class="W"> O:OO.O7 </span><span class="GR">/usr/lib/firefox-esr/firefox-esr</span></div>
<div class="r" style="top:483px;transform:translateY(0.075px) scaleX(0.69433)"><span class="W"> 2365 </span><span class="W">nicolas   </span><span class="W"> 2O </span><span class="W">  O </span><span class="CY">3O97M</span> <span class="CY"> 333M</span> <span class="CY"> 165M</span> <span class="W">S </span><span class="W"> O.O </span><span class="W"> 4.9 </span><span class="W"> O:OO.27 </span><span class="GR">/usr/lib/firefox-esr/firefox-esr</span></div>
<div class="r" style="top:491px;transform:translateY(0.200px) scaleX(0.69433)"><span class="W"> 2283 </span><span class="W">nicolas   </span><span class="W"> 2O </span><span class="W">  O </span><span class="CY">3O97M</span> <span class="CY"> 333M</span> <span class="CY"> 165M</span> <span class="W">S </span><span class="W"> O.O </span><span class="W"> 4.9 </span><span class="W"> O:OO.O8 </span><span class="GR">/usr/lib/firefox-esr/firefox-esr</span></div>
<div class="r" style="top:499px;transform:translateY(0.325px) scaleX(0.69433)"><span class="W"> 2282 </span><span class="W">nicolas   </span><span class="W"> 2O </span><span class="W">  O </span><span class="CY">3O97M</span> <span class="CY"> 333M</span> <span class="CY"> 165M</span> <span class="W">S </span><span class="W"> O.O </span><span class="W"> 4.9 </span><span class="W"> O:OO.O7 </span><span class="GR">/usr/lib/firefox-esr/firefox-esr</span></div>
<div class="r" style="top:507px;transform:translateY(0.450px) scaleX(0.69433)"><span class="W"> 2284 </span><span class="W">nicolas   </span><span class="W"> 2O </span><span class="W">  O </span><span class="CY">3O97M</span> <span class="CY"> 333M</span> <span class="CY"> 165M</span> <span class="W">S </span><span class="W"> O.O </span><span class="W"> 4.9 </span><span class="W"> O:OO.11 </span><span class="GR">/usr/lib/firefox-esr/firefox-esr</span></div>
<div class="r" style="top:515px;transform:translateY(0.575px) scaleX(0.69433)"><span class="W"> 2286 </span><span class="W">nicolas   </span><span class="W"> 2O </span><span class="W">  O </span><span class="CY">3O97M</span> <span class="CY"> 333M</span> <span class="CY"> 165M</span> <span class="W">S </span><span class="W"> O.O </span><span class="W"> 4.9 </span><span class="W"> O:OO.22 </span><span class="GR">/usr/lib/firefox-esr/firefox-esr</span></div>
<div class="r" style="top:523px;transform:translateY(0.700px) scaleX(0.69433)"><span class="W"> 24OO </span><span class="W">nicolas   </span><span class="W"> 2O </span><span class="W">  O </span><span class="CY">3O97M</span> <span class="CY"> 333M</span> <span class="CY"> 165M</span> <span class="W">S </span><span class="W"> O.O </span><span class="W"> 4.9 </span><span class="W"> O:OO.O3 </span><span class="GR">/usr/lib/firefox-esr/firefox-esr</span></div>
<div class="r" style="top:531px;transform:translateY(0.825px) scaleX(0.69433)"><span class="W"> 2352 </span><span class="W">nicolas   </span><span class="W"> 2O </span><span class="W">  O </span><span class="CY">3O97M</span> <span class="CY"> 333M</span> <span class="CY"> 165M</span> <span class="W">S </span><span class="W"> O.O </span><span class="W"> 4.9 </span><span class="W"> O:OO.O5 </span><span class="GR">/usr/lib/firefox-esr/firefox-esr</span></div>
<div class="r" style="top:539px;transform:translateY(0.950px) scaleX(0.69433)"><span class="W"> 2354 </span><span class="W">nicolas   </span><span class="W"> 2O </span><span class="W">  O </span><span class="CY">3O97M</span> <span class="CY"> 333M</span> <span class="CY"> 165M</span> <span class="W">S </span><span class="W"> O.O </span><span class="W"> 4.9 </span><span class="W"> O:OO.O5 </span><span class="GR">/usr/lib/firefox-esr/firefox-esr</span></div>
<div class="r" style="top:548px;transform:translateY(0.075px) scaleX(0.69433)"><span class="W"> 2319 </span><span class="W">nicolas   </span><span class="W"> 2O </span><span class="W">  O </span><span class="CY">3O97M</span> <span class="CY"> 333M</span> <span class="CY"> 165M</span> <span class="W">S </span><span class="W"> O.O </span><span class="W"> 4.9 </span><span class="W"> O:OO.O2 </span><span class="GR">/usr/lib/firefox-esr/firefox-esr</span></div>
<div class="r" style="top:556px;transform:translateY(0.200px) scaleX(0.69433)"><span class="W"> 2324 </span><span class="W">nicolas   </span><span class="W"> 2O </span><span class="W">  O </span><span class="CY">3O97M</span> <span class="CY"> 333M</span> <span class="CY"> 165M</span> <span class="W">S </span><span class="W"> O.O </span><span class="W"> 4.9 </span><span class="W"> O:OO.O1 </span><span class="GR">/usr/lib/firefox-esr/firefox-esr</span></div>
<div class="r" style="top:564px;transform:translateY(0.325px) scaleX(0.69433)"><span class="W"> 2272 </span><span class="W">nicolas   </span><span class="W"> 2O </span><span class="W">  O </span><span class="CY">3O97M</span> <span class="CY"> 333M</span> <span class="CY"> 165M</span> <span class="W">S </span><span class="W"> O.O </span><span class="W"> 4.9 </span><span class="W"> O:OO.OO </span><span class="GR">/usr/lib/firefox-esr/firefox-esr</span></div>
<div class="r" style="top:572px;transform:translateY(0.450px) scaleX(0.69433)"><span class="W"> 2274 </span><span class="W">nicolas   </span><span class="W"> 2O </span><span class="W">  O </span><span class="CY">3O97M</span> <span class="CY"> 333M</span> <span class="CY"> 165M</span> <span class="W">S </span><span class="W"> O.O </span><span class="W"> 4.9 </span><span class="W"> O:OO.OO </span><span class="GR">/usr/lib/firefox-esr/firefox-esr</span></div>
<div class="r" style="top:580px;transform:translateY(0.575px) scaleX(0.69433)"><span class="W"> 2276 </span><span class="W">nicolas   </span><span class="W"> 2O </span><span class="W">  O </span><span class="CY">3O97M</span> <span class="CY"> 333M</span> <span class="CY"> 165M</span> <span class="W">S </span><span class="W"> O.O </span><span class="W"> 4.9 </span><span class="W"> O:OO.OO </span><span class="GR">/usr/lib/firefox-esr/firefox-esr</span></div>
<div class="r" style="top:588px;transform:translateY(0.700px) scaleX(0.69433)"><span class="W"> 2277 </span><span class="W">nicolas   </span><span class="W"> 2O </span><span class="W">  O </span><span class="CY">3O97M</span> <span class="CY"> 333M</span> <span class="CY"> 165M</span> <span class="W">S </span><span class="W"> O.O </span><span class="W"> 4.9 </span><span class="W"> O:OO.OO </span><span class="GR">/usr/lib/firefox-esr/firefox-esr</span></div>
<div class="r" style="top:596px;transform:translateY(0.825px) scaleX(0.69433)"><span class="W"> 228O </span><span class="W">nicolas   </span><span class="W"> 2O </span><span class="W">  O </span><span class="CY">3O97M</span> <span class="CY"> 333M</span> <span class="CY"> 165M</span> <span class="W">S </span><span class="W"> O.O </span><span class="W"> 4.9 </span><span class="W"> O:OO.OO </span><span class="GR">/usr/lib/firefox-esr/firefox-esr</span></div>
<div class="r" style="top:604px;transform:translateY(0.950px) scaleX(0.69433)"><span class="W"> 2287 </span><span class="W">nicolas   </span><span class="W"> 2O </span><span class="W">  O </span><span class="CY">3O97M</span> <span class="CY"> 333M</span> <span class="CY"> 165M</span> <span class="W">S </span><span class="W"> O.O </span><span class="W"> 4.9 </span><span class="W"> O:OO.OO </span><span class="GR">/usr/lib/firefox-esr/firefox-esr</span></div>
<div class="r" style="top:613.075px;will-change:auto"><span class="W">F1</span><span class="KC">Help  </span><span class="W">F2</span><span class="KC">Setup </span><span class="W">F3</span><span class="KC">Search</span><span class="W">F4</span><span class="KC">Filter</span><span class="W">F5</span><span class="KC">Tree  </span><span class="W">F6</span><span class="KC">SortBy</span><span class="W">F7</span><span class="KC">Nice -</span><span class="W">F8</span><span class="KC">Nice +</span><span class="W">F9</span><span class="KC">Kill  </span><span class="W">F1O</span><span class="KC">Quit  </span><span class="KC">                                                                                                                                   </span></div>
</div>

<div class="a" style="left:0;top:625px;width:800px;height:15px;background:#393939"></div>
<div class="a" style="left:0;top:625px;width:800px;height:1px;background:#3f3f3f"></div>
<svg class="a" style="left:0;top:625px" width="15" height="15" viewBox="0 0 15 15">
 <path d="M1.8 5 V2.8 H4 M10.8 2.8 H13 V5 M13 10 V12.2 H10.8 M4 12.2 H1.8 V10" stroke="#6a7a96" stroke-width="1.2" fill="none"/>
 <ellipse cx="7.4" cy="7.5" rx="4.9" ry="4.1" fill="#b9b994"/>
</svg>
<div class="a" style="left:17.5px;top:627.6px;width:2.6px;height:2.4px;background:#f0f0f0"></div>
<div class="a" style="left:17.5px;top:631.3px;width:2.6px;height:2.4px;background:#f0f0f0"></div>
<div class="a" style="left:17.5px;top:635px;width:2.6px;height:2.4px;background:#f0f0f0"></div>
<svg class="a" style="left:23px;top:626px" width="13" height="13" viewBox="0 0 13 13">
 <defs><radialGradient id="ffg" cx="0.7" cy="0.15" r="0.95"><stop offset="0" stop-color="#fff04a"/><stop offset="0.35" stop-color="#ffb020"/><stop offset="0.7" stop-color="#ff5a30"/><stop offset="1" stop-color="#e8206a"/></radialGradient>
 <radialGradient id="ffp" cx="0.4" cy="0.4" r="0.7"><stop offset="0" stop-color="#6a5cff"/><stop offset="1" stop-color="#9a3ac8"/></radialGradient></defs>
 <path d="M6.5 1.6 C9.5 1.6 11.6 4 11.6 6.8 C11.6 9.6 9.3 11.8 6.4 11.8 C3.5 11.8 1.2 9.6 1.2 6.8 C1.2 5.2 1.9 3.8 3 2.9 C3 4 3.4 4.6 4 5 C4.6 3.6 5.5 2.8 6.6 2.5 Z" fill="url(#ffg)"/>
 <path d="M8.2 0.8 C9.6 1.6 10.6 3 10.8 4.6 L8.6 3.4 Z" fill="#ffd43a"/>
 <circle cx="6.9" cy="7.1" r="2.3" fill="url(#ffp)"/>
</svg>
<div class="a bt" style="left:39.4px;top:627px;">Visualiser et gérer les ...</div>
<svg class="a" style="left:143px;top:626.5px" width="12" height="12" viewBox="0 0 12 12">
 <path d="M1.5 1.5 L10.5 10.5 M10.5 1.5 L1.5 10.5" stroke="#f0501e" stroke-width="2.2"/>
 <path d="M2 1.8 H10 M6 1.8 V10.5" stroke="#1830e0" stroke-width="1.4"/>
</svg>
<div class="a bt" style="left:158.9px;top:627px;">htop</div>
<div class="a" style="left:723px;top:625.2px;width:19px;height:14.8px;background:#b4c8f0"></div>
<svg class="a" style="left:727px;top:626.5px" width="12" height="12" viewBox="0 0 12 12">
 <path d="M1.8 1.8 L10.2 10.2 M10.2 1.8 L1.8 10.2" stroke="#f0501e" stroke-width="2.1"/>
 <path d="M2.2 2 H9.8 M6 2 V10.4" stroke="#1830e0" stroke-width="1.4"/>
</svg>
<div class="a" style="left:742px;top:625.2px;width:58px;height:14.8px;background:#2b2b2b"></div>
<div class="a" style="left:761px;top:625.2px;width:1px;height:14.8px;background:#3a3a3a"></div>
<div class="a" style="left:780px;top:625.2px;width:1px;height:14.8px;background:#3a3a3a"></div>
<svg class="a" style="left:74px;top:244px" width="9" height="13" viewBox="0 0 9 13">
 <path d="M1.75 1.5 V10.2 L3.7 8.5 L5.2 11.5 L6.3 11 L4.9 8.1 L7.3 8 Z" fill="#f4f4f4" stroke="#222" stroke-width="0.4"/>
</svg>

</body></html>
